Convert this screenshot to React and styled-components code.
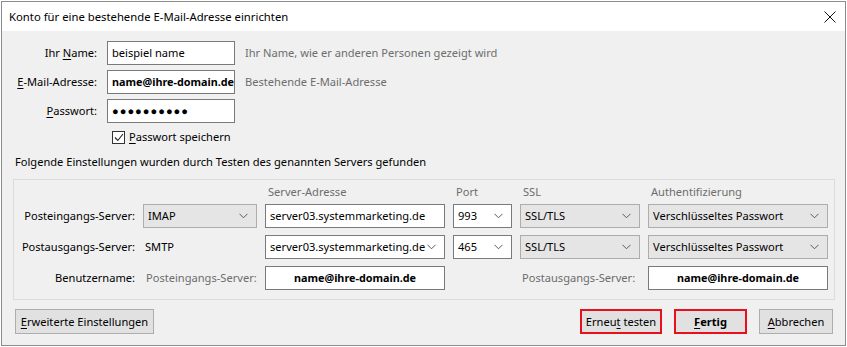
import styled, { createGlobalStyle } from "styled-components"

const Global = createGlobalStyle`
    html, body {
        margin: 0;
        padding: 0;
        background: #ffffff;
    }
    body {
        font-family: "Noto Sans", "Open Sans", sans-serif;
        font-size: 11.1px;
        line-height: 16px;
        color: #000;
    }
`

const Window = styled.div`
    width: 843px;
    height: 343px;
    margin: 1px 0 0 1px;
    border: 1px solid #8c8c8c;
    background: #f0f0f0;
    display: flex;
    flex-direction: column;
`

const TitleBar = styled.div`
    height: 29px;
    background: #fff;
    display: flex;
    align-items: center;
    justify-content: space-between;
    padding: 0 8px 0 7px;
    font-size: 11.3px;
`

const Close = styled.svg`
    width: 12px;
    height: 12px;
    margin-right: 1px;
`

const Body = styled.div`
    flex: 1;
    padding: 10px 10px 0 11px;
    display: flex;
    flex-direction: column;
`

const Form = styled.div`
    display: grid;
    grid-template-columns: 84px 128px auto;
    column-gap: 10px;
    row-gap: 5px;
    align-items: center;
`

const Label = styled.label`
    text-align: right;
    white-space: nowrap;
    color: ${p => (p.$muted ? "#6d6d6d" : "#000")};
`

const Key = styled.span`
    text-decoration: underline;
    text-underline-offset: 2px;
`

const Field = styled.div`
    height: 24px;
    box-sizing: border-box;
    border: 1px solid #7a7a7a;
    background: #fff;
    display: flex;
    align-items: center;
    justify-content: ${p => (p.$center ? "center" : "flex-start")};
    padding: 0 4px;
    font-weight: ${p => (p.$bold ? 700 : 400)};
    font-size: ${p => (p.$bold ? "10.8px" : "11.1px")};
    letter-spacing: ${p => (p.$dots ? "1px" : "0")};
    white-space: nowrap;
    overflow: hidden;
`

const Hint = styled.span`
    color: #6d6d6d;
    white-space: nowrap;
`

const CheckRow = styled.div`
    grid-column: 2 / 4;
    display: flex;
    align-items: center;
    gap: 4px;
    margin: 1px 0 0 5px;
`

const Check = styled.span`
    width: 11px;
    height: 11px;
    border: 1px solid #333;
    background: #fff;
    display: flex;
    align-items: center;
    justify-content: center;
`

const Note = styled.div`
    margin: 9px 0 0 2px;
`

const Group = styled.div`
    margin: 9px 0 0 0;
    border: 1px solid #dcdcdc;
    padding: 4px 5px 9px 6px;
    display: grid;
    grid-template-columns: 115px 114px 180px 59px 120px 180px;
    column-gap: 8px;
    row-gap: 7px;
    align-items: center;
`

const Head = styled.div`
    color: #6d6d6d;
    height: 15px;
    line-height: 15px;
    padding-left: 3px;
    margin-bottom: -2px;
`

const Plain = styled.div`
    padding-left: ${p => p.$pad || 2}px;
    color: ${p => (p.$muted ? "#6d6d6d" : "#000")};
    white-space: nowrap;
`

const Select = styled.div`
    height: 24px;
    box-sizing: border-box;
    border: 1px solid ${p => (p.$white ? "#7a7a7a" : "#adadad")};
    background: ${p => (p.$white ? "#fff" : "#e5e5e5")};
    display: flex;
    align-items: center;
    justify-content: space-between;
    padding: 0 8px 0 4px;
    white-space: nowrap;
    overflow: hidden;
`

const Chevron = () => (
    <svg width="9" height="6" viewBox="0 0 9 6">
        <path d="M0.5 0.8 L4.5 4.8 L8.5 0.8" fill="none" stroke="#5a5a5a" strokeWidth="1" />
    </svg>
)

const Footer = styled.div`
    margin-top: 9px;
    display: flex;
    align-items: center;
    padding: 0 2px;
`

const Button = styled.button`
    height: 25px;
    box-sizing: border-box;
    padding: 0;
    font-family: inherit;
    font-size: 11.1px;
    font-weight: ${p => (p.$bold ? 700 : 400)};
    white-space: nowrap;
    background: #e1e1e1;
    border: ${p => (p.$marked ? "2px solid #e8101b" : "1px solid #adadad")};
    width: ${p => p.$w}px;
    margin-left: ${p => p.$gap || 0}px;
    color: #000;
`

const Spacer = styled.div`
    flex: 1;
`

export default function App() {
    return (
        <>
            <Global />
            <Window>
                <TitleBar>
                    <span>Konto für eine bestehende E-Mail-Adresse einrichten</span>
                    <Close viewBox="0 0 12 12">
                        <path d="M0.5 0.5 L11.5 11.5 M11.5 0.5 L0.5 11.5" stroke="#111" strokeWidth="1" />
                    </Close>
                </TitleBar>
                <Body>
                    <Form>
                        <Label>Ihr <Key>N</Key>ame:</Label>
                        <Field>beispiel name</Field>
                        <Hint>Ihr Name, wie er anderen Personen gezeigt wird</Hint>

                        <Label><Key>E</Key>-Mail-Adresse:</Label>
                        <Field $bold>name@ihre-domain.de</Field>
                        <Hint>Bestehende E-Mail-Adresse</Hint>

                        <Label><Key>P</Key>asswort:</Label>
                        <Field $dots>●●●●●●●●●●</Field>
                        <span />

                        <span />
                        <CheckRow>
                            <Check>
                                <svg width="10" height="9" viewBox="0 0 10 9">
                                    <path d="M1 4.5 L3.8 7.5 L9 1" fill="none" stroke="#222" strokeWidth="1.1" />
                                </svg>
                            </Check>
                            <span><Key>P</Key>asswort speichern</span>
                        </CheckRow>
                    </Form>

                    <Note>Folgende Einstellungen wurden durch Testen des genannten Servers gefunden</Note>

                    <Group>
                        <span />
                        <span />
                        <Head>Server-Adresse</Head>
                        <Head>Port</Head>
                        <Head>SSL</Head>
                        <Head>Authentifizierung</Head>

                        <Label>Posteingangs-Server:</Label>
                        <Select>IMAP<Chevron /></Select>
                        <Field>server03.systemmarketing.de</Field>
                        <Select $white>993<Chevron /></Select>
                        <Select>SSL/TLS<Chevron /></Select>
                        <Select>Verschlüsseltes Passwort<Chevron /></Select>

                        <Label>Postausgangs-Server:</Label>
                        <Plain>SMTP</Plain>
                        <Select $white>server03.systemmarketing.de<Chevron /></Select>
                        <Select $white>465<Chevron /></Select>
                        <Select>SSL/TLS<Chevron /></Select>
                        <Select>Verschlüsseltes Passwort<Chevron /></Select>

                        <Label>Benutzername:</Label>
                        <Plain $muted $pad={3}>Posteingangs-Server:</Plain>
                        <Field $bold $center>name@ihre-domain.de</Field>
                        <span />
                        <Plain $muted>Postausgangs-Server:</Plain>
                        <Field $bold $center>name@ihre-domain.de</Field>
                    </Group>

                    <Footer>
                        <Button $w={139}><Key>E</Key>rweiterte Einstellungen</Button>
                        <Spacer />
                        <Button $w={82} $marked>Erneu<Key>t</Key> testen</Button>
                        <Button $w={73} $gap={12} $marked $bold><Key>F</Key>ertig</Button>
                        <Button $w={74} $gap={12}><Key>A</Key>bbrechen</Button>
                    </Footer>
                </Body>
            </Window>
        </>
    )
}
